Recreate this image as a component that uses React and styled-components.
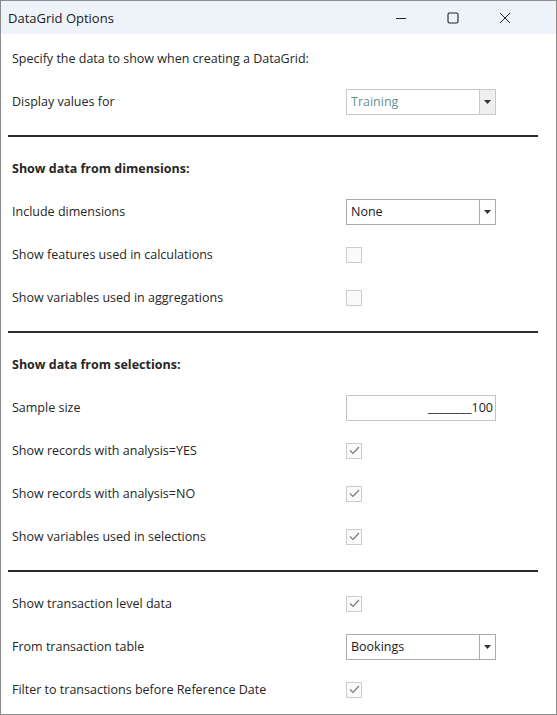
import React from 'react'
import styled, { createGlobalStyle } from 'styled-components'

const GlobalStyle = createGlobalStyle`
  html, body {
    margin: 0;
    padding: 0;
    background: #ffffff;
  }
  body {
    font-family: "Open Sans", "Noto Sans", "Liberation Sans", sans-serif;
  }
`

const Window = styled.div`
  width: 557px;
  height: 715px;
  box-sizing: border-box;
  border: 1px solid #8c8c8c;
  background: #ffffff;
  display: flex;
  flex-direction: column;
  overflow: hidden;
`

const TitleBar = styled.div`
  height: 33px;
  flex-shrink: 0;
  background: #eef2f9;
  display: flex;
  align-items: center;
  justify-content: space-between;
  padding-left: 7px;
`

const Title = styled.span`
  font-size: 13px;
  color: #1a1a1a;
`

const Controls = styled.div`
  display: flex;
  height: 100%;
  margin-right: 25px;
`

const CtrlButton = styled.div`
  width: 52px;
  height: 100%;
  display: flex;
  align-items: center;
  justify-content: center;
  color: #222;
`

const Body = styled.div`
  padding: 3px 18px 0 11px;
  display: flex;
  flex-direction: column;
`

const Row = styled.div`
  height: 43px;
  display: flex;
  align-items: center;
  font-size: 12.5px;
  color: #262626;
  font-weight: ${p => (p.$bold ? 700 : 400)};
`

const Label = styled.span`
  width: 334px;
  flex-shrink: 0;
`

const Separator = styled.hr`
  border: none;
  height: 2px;
  background: #2b2b2b;
  margin: 12px 0 10px -4px;
`

const Select = styled.div`
  width: 150px;
  height: 26px;
  box-sizing: border-box;
  border: 1px solid ${p => (p.$disabled ? '#c9c9c9' : '#ababab')};
  background: #ffffff;
  display: flex;
`

const SelectValue = styled.span`
  flex: 1;
  padding-left: 4px;
  display: flex;
  align-items: center;
  font-size: 12.5px;
  color: ${p => (p.$disabled ? '#5f9393' : '#1a1a1a')};
`

const SelectArrow = styled.span`
  width: 15px;
  border-left: 1px solid ${p => (p.$disabled ? '#c9c9c9' : '#ababab')};
  background: ${p => (p.$disabled ? '#efefef' : '#ffffff')};
  display: flex;
  align-items: center;
  justify-content: center;
`

const TextBox = styled.div`
  width: 150px;
  height: 26px;
  box-sizing: border-box;
  border: 1px solid #c2c2c2;
  display: flex;
  align-items: center;
  justify-content: flex-end;
  padding-right: 2px;
  font-size: 12.5px;
  color: #1a1a1a;
`

const Check = styled.span`
  width: 16px;
  height: 16px;
  box-sizing: border-box;
  border: 1px solid #cccccc;
  background: #fafafa;
  display: flex;
  align-items: center;
  justify-content: center;
`

const Arrow = () => (
  <svg width="7" height="4" viewBox="0 0 7 4">
    <path d="M0 0h7L3.5 4z" fill="#333" />
  </svg>
)

const Dropdown = ({ value, disabled }) => (
  <Select $disabled={disabled}>
    <SelectValue $disabled={disabled}>{value}</SelectValue>
    <SelectArrow $disabled={disabled}>
      <Arrow />
    </SelectArrow>
  </Select>
)

const CheckBox = ({ checked }) => (
  <Check>
    {checked && (
      <svg width="11" height="9" viewBox="0 0 11 9">
        <path d="M1 4.5l3 3L10 1" fill="none" stroke="#7a7a7a" strokeWidth="1.2" />
      </svg>
    )}
  </Check>
)

const App = () => {
  return (
    <>
      <GlobalStyle />
      <Window>
        <TitleBar>
          <Title>DataGrid Options</Title>
          <Controls>
            <CtrlButton>
              <svg width="12" height="12" viewBox="0 0 12 12">
                <path d="M1 6.5h10" stroke="#222" strokeWidth="1" />
              </svg>
            </CtrlButton>
            <CtrlButton>
              <svg width="12" height="12" viewBox="0 0 12 12">
                <rect x="1" y="1" width="10" height="10" rx="1.5" fill="none" stroke="#222" strokeWidth="1.1" />
              </svg>
            </CtrlButton>
            <CtrlButton>
              <svg width="12" height="12" viewBox="0 0 12 12">
                <path d="M1 1l10 10M11 1L1 11" stroke="#222" strokeWidth="1" />
              </svg>
            </CtrlButton>
          </Controls>
        </TitleBar>

        <Body>
          <Row>
            <Label>Specify the data to show when creating a DataGrid:</Label>
          </Row>
          <Row>
            <Label>Display values for</Label>
            <Dropdown value="Training" disabled />
          </Row>

          <Separator />

          <Row $bold>
            <Label>Show data from dimensions:</Label>
          </Row>
          <Row>
            <Label>Include dimensions</Label>
            <Dropdown value="None" />
          </Row>
          <Row>
            <Label>Show features used in calculations</Label>
            <CheckBox />
          </Row>
          <Row>
            <Label>Show variables used in aggregations</Label>
            <CheckBox />
          </Row>

          <Separator />

          <Row $bold>
            <Label>Show data from selections:</Label>
          </Row>
          <Row>
            <Label>Sample size</Label>
            <TextBox>________100</TextBox>
          </Row>
          <Row>
            <Label>Show records with analysis=YES</Label>
            <CheckBox checked />
          </Row>
          <Row>
            <Label>Show records with analysis=NO</Label>
            <CheckBox checked />
          </Row>
          <Row>
            <Label>Show variables used in selections</Label>
            <CheckBox checked />
          </Row>

          <Separator />

          <Row>
            <Label>Show transaction level data</Label>
            <CheckBox checked />
          </Row>
          <Row>
            <Label>From transaction table</Label>
            <Dropdown value="Bookings" />
          </Row>
          <Row>
            <Label>Filter to transactions before Reference Date</Label>
            <CheckBox checked />
          </Row>
        </Body>
      </Window>
    </>
  )
}

export default App
